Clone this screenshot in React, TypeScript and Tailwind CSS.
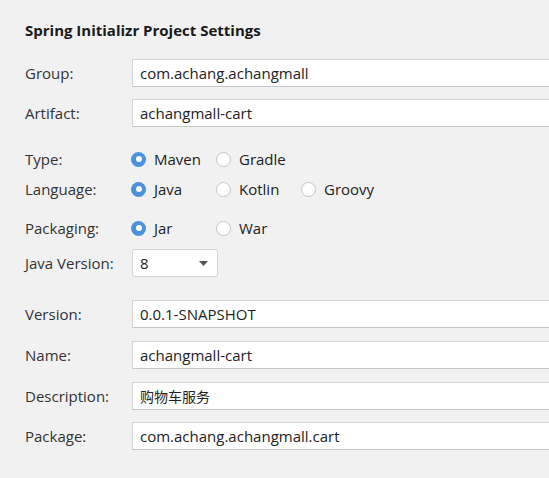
import React from 'react';

const font = { fontFamily: '"Open Sans", "Noto Sans CJK SC", sans-serif' };

const TextRow: React.FC<{ label: string; value: React.ReactNode; className?: string }> = ({ label, value, className }) => (
  <div className={`flex items-center h-[28px] ${className ?? ''}`}>
    <div className="w-[107px] shrink-0 text-[15px] text-[#333]">{label}</div>
    <div className="flex-1 h-[28px] -mr-[4px] bg-white border border-[#d3d3d3] border-b-[#c6c6c6] flex items-center pl-[7px] text-[15px] text-[#222]">
      {value}
    </div>
  </div>
);

const Radio: React.FC<{ label: string; checked?: boolean }> = ({ label, checked }) => (
  <div className="w-[85px] flex items-center gap-[8px]">
    {checked ? (
      <span className="w-[15px] h-[15px] rounded-full bg-[#4a92dc] flex items-center justify-center">
        <span className="w-[6px] h-[6px] rounded-full bg-white" />
      </span>
    ) : (
      <span className="w-[15px] h-[15px] rounded-full bg-white border border-[#c4c4c4]" />
    )}
    <span className="text-[15px] text-[#222]">{label}</span>
  </div>
);

const RadioRow: React.FC<{ label: string; options: string[]; className?: string }> = ({ label, options, className }) => (
  <div className={`flex items-center h-[20px] ${className ?? ''}`}>
    <div className="w-[106px] shrink-0 text-[15px] text-[#333]">{label}</div>
    {options.map((o, i) => (
      <Radio key={o} label={o} checked={i === 0} />
    ))}
  </div>
);

export default function App() {
  return (
    <div className="w-[549px] h-[478px] overflow-hidden bg-[#f1f1f1] pt-[20px] pl-[25px]" style={font}>
      {/* Header */}
      <h2 className="h-[20px] leading-[20px] text-[15px] font-bold text-[#1a1a1a]">Spring Initializr Project Settings</h2>

      <TextRow label="Group:" value="com.achang.achangmall" className="mt-[19px]" />
      <TextRow label="Artifact:" value="achangmall-cart" className="mt-[12px]" />

      <RadioRow label="Type:" options={['Maven', 'Gradle']} className="mt-[22px]" />
      <RadioRow label="Language:" options={['Java', 'Kotlin', 'Groovy']} className="mt-[10px]" />
      <RadioRow label="Packaging:" options={['Jar', 'War']} className="mt-[19px]" />

      {/* Java version select */}
      <div className="flex items-center h-[28px] mt-[11px]">
        <div className="w-[107px] shrink-0 text-[15px] text-[#333]">Java Version:</div>
        <div className="w-[86px] h-[28px] bg-white border border-[#d3d3d3] rounded-[3px] flex items-center pl-[7px] pr-[9px] text-[15px] text-[#222]">
          <span className="flex-1">8</span>
          <svg width="9" height="5" viewBox="0 0 9 5">
            <path d="M0 0 H9 L4.5 5 Z" fill="#555" />
          </svg>
        </div>
      </div>

      <TextRow label="Version:" value="0.0.1-SNAPSHOT" className="mt-[23px]" />
      <TextRow label="Name:" value="achangmall-cart" className="mt-[13px]" />
      <TextRow label="Description:" value={<span className="text-[14px]">购物车服务</span>} className="mt-[13px]" />
      <TextRow label="Package:" value="com.achang.achangmall.cart" className="mt-[12px]" />
    </div>
  );
}
